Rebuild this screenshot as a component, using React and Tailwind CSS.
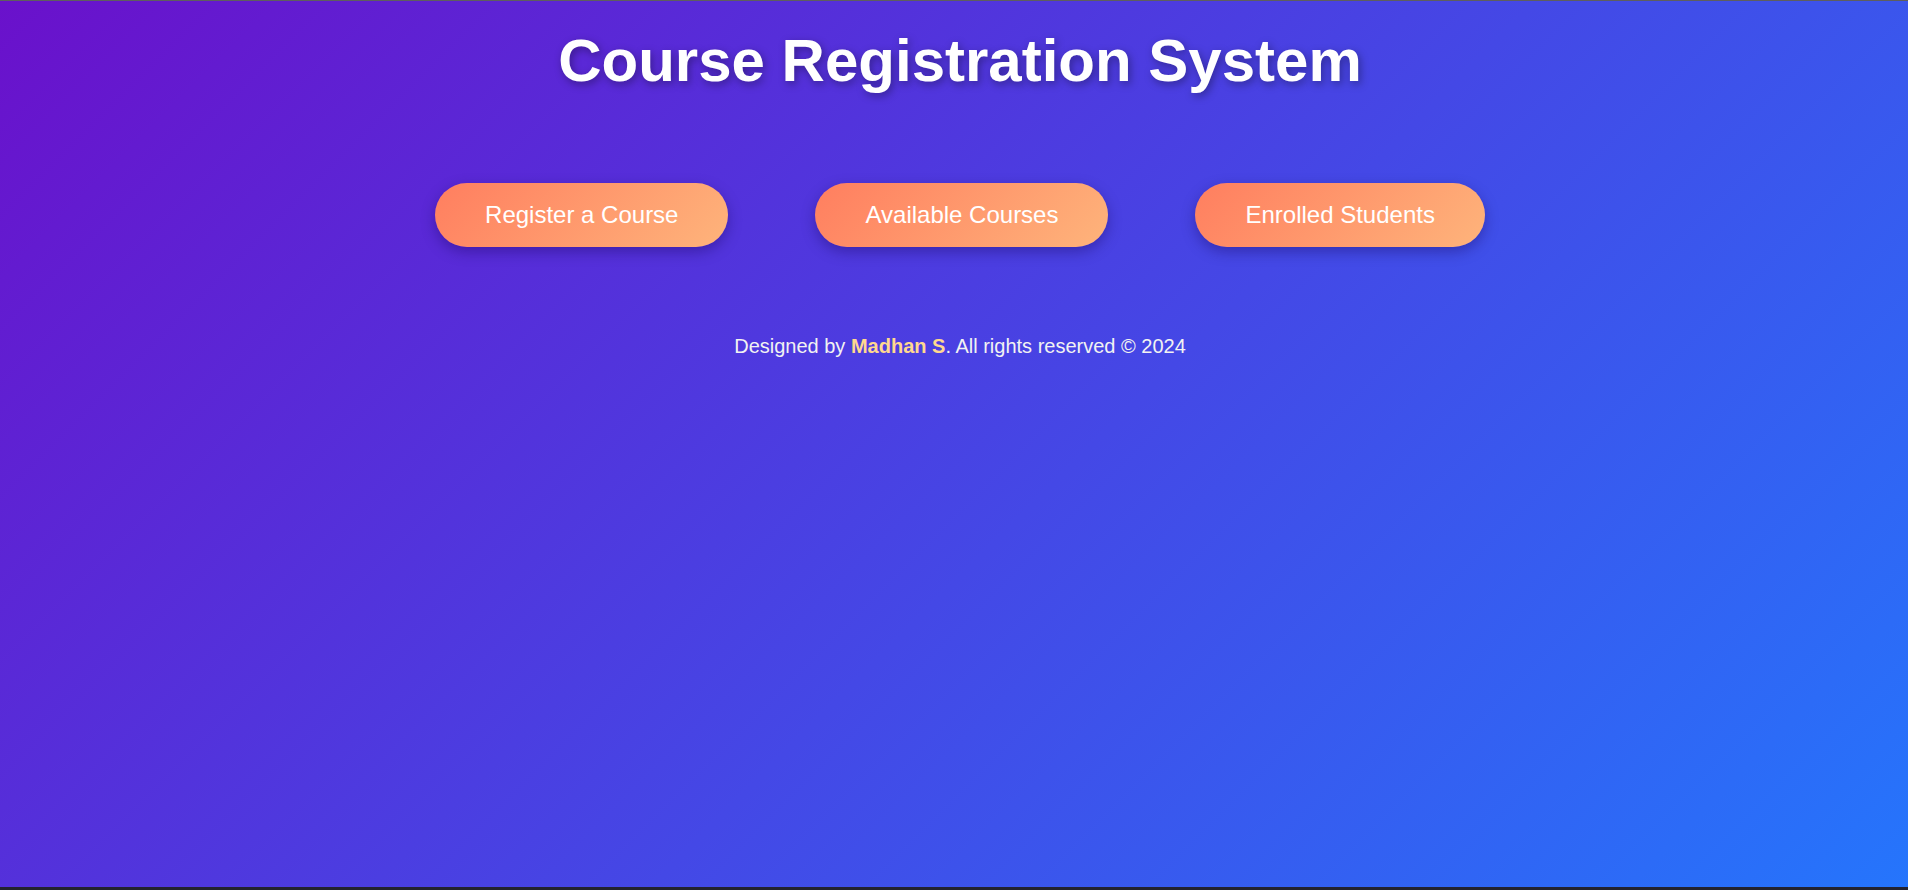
import React from "react";

const links = ["Register a Course", "Available Courses", "Enrolled Students"];

const App = () => {
  return (
    <div className="h-screen flex flex-col font-['Liberation_Sans',Arial,sans-serif]">
      {/* thin top edge */}
      <div className="h-px bg-[#5e5e5e]" />

      <main className="flex-1 flex flex-col items-center pl-[12px] bg-[linear-gradient(135deg,#6a11cb,#2575fc)]">
        <h1 className="mt-[25px] text-[60px] leading-[69px] font-bold text-white [text-shadow:2px_3px_8px_rgba(0,0,0,0.35)]">
          Course Registration System
        </h1>

        {/* Nav buttons */}
        <div className="mt-[88px] flex items-center gap-[87px]">
          {links.map((label) => (
            <button
              key={label}
              className="px-[50px] py-[18px] text-[24px] leading-[28px] text-white rounded-full bg-[linear-gradient(135deg,#ff7e5f,#feb47b)] shadow-[0_5px_14px_rgba(20,0,80,0.35)] hover:scale-105 transition"
            >
              {label}
            </button>
          ))}
        </div>

        <footer className="mt-[88px] text-[20px] leading-[23px] text-[#f2f2f2]">
          Designed by <span className="font-bold text-[#ffd88f]">Madhan S</span>. All rights reserved © 2024
        </footer>
      </main>

      <div className="h-[3px] bg-[#23232f]" />
    </div>
  );
};

export default App;
